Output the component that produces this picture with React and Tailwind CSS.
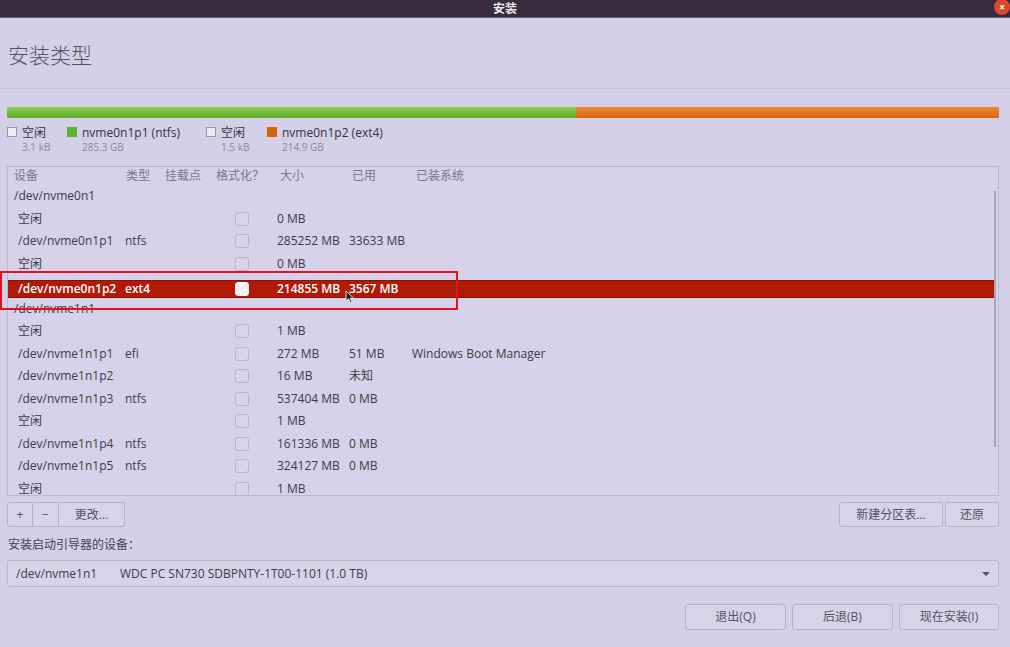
import { useState } from "react"

const font = { fontFamily: '"Open Sans", "Noto Sans CJK SC", sans-serif' }

const rows = [
  { dev: "/dev/nvme0n1", top: true },
  { dev: "空闲", size: "0 MB" },
  { dev: "/dev/nvme0n1p1", type: "ntfs", size: "285252 MB", used: "33633 MB" },
  { dev: "空闲", size: "0 MB" },
  { dev: "/dev/nvme0n1p2", type: "ext4", size: "214855 MB", used: "3567 MB", selected: true },
  { dev: "/dev/nvme1n1", top: true },
  { dev: "空闲", size: "1 MB" },
  { dev: "/dev/nvme1n1p1", type: "efi", size: "272 MB", used: "51 MB", sys: "Windows Boot Manager" },
  { dev: "/dev/nvme1n1p2", size: "16 MB", used: "未知" },
  { dev: "/dev/nvme1n1p3", type: "ntfs", size: "537404 MB", used: "0 MB" },
  { dev: "空闲", size: "1 MB" },
  { dev: "/dev/nvme1n1p4", type: "ntfs", size: "161336 MB", used: "0 MB" },
  { dev: "/dev/nvme1n1p5", type: "ntfs", size: "324127 MB", used: "0 MB" },
  { dev: "空闲", size: "1 MB" },
]

const legend = [
  { box: "border border-[#9a97a8] bg-[#eceaf5]", name: "空闲", size: "3.1 kB", w: "w-[60px]" },
  { box: "bg-[#5cb52e]", name: "nvme0n1p1 (ntfs)", size: "285.3 GB", w: "w-[139px]" },
  { box: "border border-[#9a97a8] bg-[#eceaf5]", name: "空闲", size: "1.5 kB", w: "w-[61px]" },
  { box: "bg-[#d8620e]", name: "nvme0n1p2 (ext4)", size: "214.9 GB", w: "w-[140px]" },
]

const Row = ({ r }) => {
  if (r.top) {
    return (
      <div className="h-[22.5px] flex items-center pl-[6px] text-[12px] text-[#3e3c48]">{r.dev}</div>
    )
  }
  const txt = r.selected ? "text-white font-semibold" : "text-[#3e3c48]"
  return (
    <div className="h-[22.5px] flex items-center">
      <div className={`w-full flex items-center text-[12px] ${txt} ${r.selected ? "h-[18px] bg-[#b11a06] border-y border-[#8c1004] mt-[5px]" : ""}`}>
        <span className="w-[117px] pl-[10px]">{r.dev}</span>
        <span className="w-[39px]">{r.type}</span>
        <span className="w-[51px]"></span>
        <span className="w-[62px] pl-[20px]">
          <span className={`block w-[14px] h-[14px] rounded-[3px] border ${r.selected ? "bg-[#f4f2f8] border-[#f4f2f8]" : "border-[#b9b6c9] bg-[#d8d5ea]"}`}></span>
        </span>
        <span className="w-[72px]">{r.size}</span>
        <span className="w-[63px]">{r.used}</span>
        <span>{r.sys}</span>
      </div>
    </div>
  )
}

const Btn = ({ children, className = "" }) => (
  <button className={`h-[25px] border border-[#b6b3c8] rounded-[3px] bg-[#d7d4ea] text-[12px] text-[#55525f] flex items-center justify-center ${className}`}>
    {children}
  </button>
)

export default function App() {
  const [sel] = useState(4)
  return (
    <div className="relative w-[1010px] h-[647px] overflow-hidden bg-[#d3d0e7]" style={font}>
      {/* title bar */}
      <div className="relative h-[18px] bg-[#382b3e] flex items-center justify-center border-b border-[#6a5e78]">
        <span className="text-[12px] font-bold text-[#eeeaf2]">安装</span>
        <span className="absolute right-0 top-[-1px] w-[16px] h-[16px] rounded-full bg-[#e0462a] flex items-center justify-center text-white text-[10px] font-bold leading-none">×</span>
      </div>

      <div className="pl-[7px] pr-[11px]">
        <div className="pl-[1px] pt-[22px] h-[70px] text-[21px] text-[#57545f] font-light">安装类型</div>
        <div className="h-px bg-[#c7c4da] -ml-[7px] -mr-[11px]"></div>

        {/* partition bar */}
        <div className="mt-[18px] h-[11px] flex rounded-[1px] overflow-hidden">
          <div className="w-[569px] bg-gradient-to-b from-[#8ad04e] to-[#5fae2c]"></div>
          <div className="flex-1 bg-gradient-to-b from-[#ee8a34] to-[#d8650f]"></div>
        </div>

        {/* legend */}
        <div className="mt-[7px] flex h-[33px]">
          {legend.map((l, i) => (
            <div key={i} className={`flex ${l.w}`}>
              <span className={`mt-[2px] w-[10px] h-[10px] ${l.box}`}></span>
              <div className="ml-[5px]">
                <div className="text-[12px] leading-[15px] text-[#35333d]">{l.name}</div>
                <div className="text-[10px] leading-[14px] text-[#8d8a99]">{l.size}</div>
              </div>
            </div>
          ))}
        </div>

        {/* table */}
        <div className="relative mt-[8px] h-[330px] border border-[#bcb9cf] bg-[#d5d2e9] overflow-hidden">
          <div className="h-[18px] flex items-end text-[12px] text-[#7b7887] pl-[6px]">
            <span className="w-[112px]">设备</span>
            <span className="w-[39px]">类型</span>
            <span className="w-[51px]">挂载点</span>
            <span className="w-[64px]">格式化？</span>
            <span className="w-[72px]">大小</span>
            <span className="w-[64px]">已用</span>
            <span>已装系统</span>
          </div>
          <div className="pr-[2px]">
            {rows.map((r, i) => (
              <Row key={i} r={{ ...r, selected: i === sel }} />
            ))}
          </div>
          <div className="absolute right-[2px] top-[24px] w-[2px] h-[256px] bg-[#a7a4b8]"></div>
        </div>

        {/* toolbar */}
        <div className="mt-[6px] flex justify-between">
          <div className="flex">
            <Btn className="w-[26px] rounded-r-none text-[#8a8796]">+</Btn>
            <Btn className="w-[26px] rounded-none border-l-0 text-[#8a8796]">−</Btn>
            <Btn className="w-[66px] rounded-l-none border-l-0">更改...</Btn>
          </div>
          <div className="flex gap-[2px]">
            <Btn className="w-[104px] text-[#8c8998]">新建分区表...</Btn>
            <Btn className="w-[54px]">还原</Btn>
          </div>
        </div>

        <div className="mt-[9px] text-[12px] text-[#45424f] pl-[1px]">安装启动引导器的设备：</div>

        {/* combo */}
        <div className="mt-[6px] h-[27px] border border-[#bcb9cf] rounded-[3px] bg-[#d7d4ea] flex items-center px-[8px] text-[12px] text-[#3e3c48]">
          <span className="w-[104px]">/dev/nvme1n1</span>
          <span className="flex-1">WDC PC SN730 SDBPNTY-1T00-1101 (1.0 TB)</span>
          <span className="w-0 h-0 border-l-[4px] border-r-[4px] border-t-[4px] border-l-transparent border-r-transparent border-t-[#55525f]"></span>
        </div>

        {/* bottom buttons */}
        <div className="mt-[17px] flex justify-end gap-[6px]">
          <Btn className="w-[101px] h-[26px]">退出(Q)</Btn>
          <Btn className="w-[101px] h-[26px]">后退(B)</Btn>
          <Btn className="w-[100px] h-[26px]">现在安装(I)</Btn>
        </div>
      </div>

      {/* red annotation box */}
      <div className="absolute left-0 top-[271px] w-[458px] h-[39px] border-2 border-[#e8101e]"></div>

      {/* mouse cursor */}
      <svg className="absolute left-[345px] top-[290px]" width="10" height="14" viewBox="0 0 10 14">
        <path d="M1 1 L1 11 L3.5 8.8 L5.4 12.8 L7 12 L5.2 8.2 L8.6 8.2 Z" fill="#222" stroke="#fff" strokeWidth="0.8" />
      </svg>
    </div>
  )
}
